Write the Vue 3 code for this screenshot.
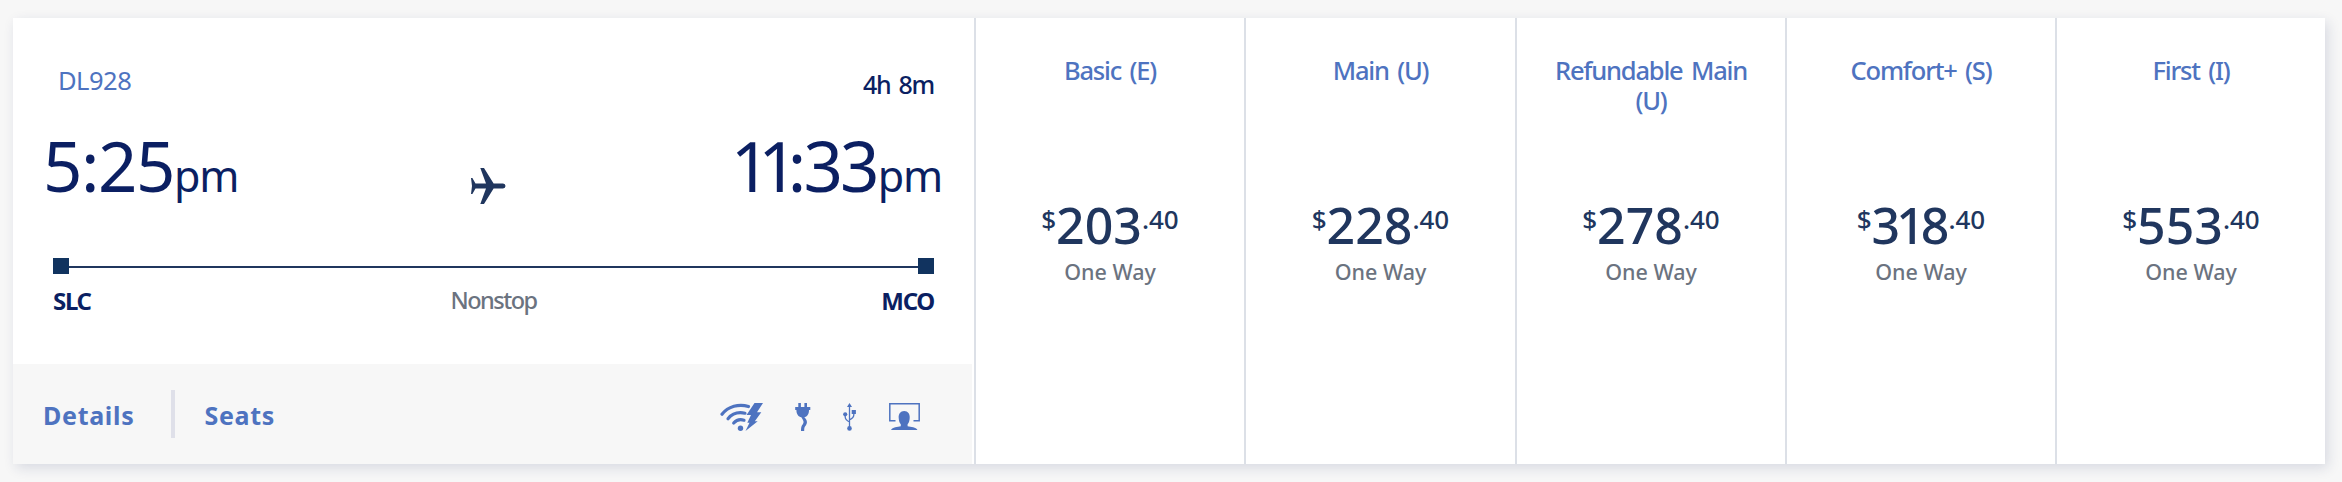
<template>
  <div class="page">
    <div class="flight-card">
      <section class="flight">
        <div class="flight-info">
          <div class="row top-row">
            <a class="flight-number">DL928</a>
            <span class="duration">4h 8m</span>
          </div>
          <div class="row times">
            <div class="time">
              <span>5:25</span><small>pm</small>
            </div>
            <svg class="plane" width="36" height="38" viewBox="0 0 36 38">
              <path d="M1 11 L2.4 11 L5.5 16.6 L16 16.6 L10.3 1 L14 1 L23.6 16.6 L33 16.6 Q35.5 16.9 35.5 19 Q35.5 21.1 33 21.4 L23.6 21.4 L14 37 L10.3 37 L16 21.4 L5.5 21.4 L2.4 27 L1 27 L2 19 Z" fill="#20365e" />
            </svg>
            <div class="time arrival">
              <span class="ones">11</span><span>:33</span><small>pm</small>
            </div>
          </div>
          <div class="track">
            <i class="stop"></i>
            <i class="line"></i>
            <i class="stop"></i>
          </div>
          <div class="row airports">
            <span class="airport">SLC</span>
            <span class="nonstop">Nonstop</span>
            <span class="airport airport-to">MCO</span>
          </div>
        </div>
        <div class="flight-footer">
          <a class="link">Details</a>
          <i class="separator"></i>
          <a class="link">Seats</a>
          <div class="amenities">
            <svg class="wifi" width="44" height="28" viewBox="0 0 44 28">
              <g fill="none" stroke="#4e73c0" stroke-linecap="round">
                <path d="M2 11.3 C8 3.5 19 .4 28.5 3.6" stroke-width="3.2" />
                <path d="M8 15.7 C12 10.7 18.5 8.8 25 10.2" stroke-width="3.2" />
                <path d="M13.7 20 C16.3 17 20 16 24 17.2" stroke-width="3.2" />
              </g>
              <circle cx="20.5" cy="25.2" r="2.7" fill="#4e73c0" />
              <path d="M34.5 0 H43 L37 9.3 H41.3 L34.8 18.3 H37.7 L25.5 28 L29.5 19.7 H27.3 L31 12 H26.5 Z" fill="#4e73c0" />
            </svg>
            <svg class="plug" width="16" height="28" viewBox="0 0 16 28">
              <path d="M3.3 0 H5.9 V4 H9.4 V0 H12 V4 H15.3 V7 H14 C14 11.4 12 13.7 9.3 14.3 C13 18 12.5 20.5 10 23.6 C9.3 24.6 9.2 26 9.2 28 H6 C6 24.8 6.3 23 7.8 21.2 C9.5 19 8.2 17.3 6.3 14.3 C3.5 13.7 1.4 11.4 1.4 7 H.2 V4 H3.3 Z" fill="#4e73c0" />
            </svg>
            <svg class="usb" width="14" height="28" viewBox="0 0 14 28">
              <path d="M6.5 24 V3 M2.2 11 V14 Q2.2 16.8 6.5 19 M10.8 9 V12 Q10.8 14.7 6.5 16.8" fill="none" stroke="#4e73c0" stroke-width="1.3" />
              <path d="M6.5 0 L9 4 H4 Z M8.7 7 H12.9 V11 H8.7 Z" fill="#4e73c0" />
              <circle cx="2.2" cy="11.3" r="2.1" fill="#4e73c0" />
              <circle cx="6.5" cy="25.4" r="2.3" fill="#4e73c0" />
            </svg>
            <svg class="screen" width="31" height="28" viewBox="0 0 31 28">
              <path d="M6.5 17.8 H.8 V.8 H30.2 V17.8 H24.5" fill="none" stroke="#4e73c0" stroke-width="1.5" />
              <path d="M15.2 8 C19 8 21 11 20.7 15 C20.6 18 19.6 20.3 18.6 21.3 V23.2 C22 24 27 23.8 28.5 27 H2 C3.5 23.8 8.5 24 11.8 23.2 V21.3 C10.8 20.3 9.8 18 9.7 15 C9.4 11 11.4 8 15.2 8 Z" fill="#4e73c0" />
            </svg>
          </div>
        </div>
      </section>

      <section v-for="fare in fares" :key="fare.name" class="fare">
        <div class="fare-name">{{ fare.name }}</div>
        <div class="price">
          <span class="currency">$</span>
          <span class="dollars" :class="{ tight: fare.dollars.includes('1') }">{{ fare.dollars }}</span>
          <span class="cents">.40</span>
        </div>
        <div class="trip">One Way</div>
      </section>
    </div>
  </div>
</template>

<script setup>
import { ref } from 'vue';

const fares = ref([
  { name: 'Basic (E)', dollars: '203' },
  { name: 'Main (U)', dollars: '228' },
  { name: 'Refundable Main (U)', dollars: '278' },
  { name: 'Comfort+ (S)', dollars: '318' },
  { name: 'First (I)', dollars: '553' },
]);
</script>

<style>
body {
  background-color: #f7f7f7;
}
</style>

<style scoped>
.page {
  box-sizing: border-box;
  height: 482px;
  padding: 18px 17px 18px 13px;
  overflow: hidden;
  background-color: #f7f7f7;
  font-family: "Noto Sans", "Open Sans", sans-serif;
}

.flight-card {
  display: grid;
  grid-template-columns: 961px 270px 271px 270px 270px 270px;
  height: 446px;
  background-color: #ffffff;
  box-shadow: 3px 4px 12px rgba(30, 40, 100, 0.14);
}

.flight {
  display: flex;
  flex-direction: column;
}

.flight-info {
  height: 346px;
  box-sizing: border-box;
  padding-top: 42px;
}

.row {
  display: flex;
  justify-content: space-between;
}

.top-row {
  height: 65px;
  padding: 0 40px 0 45px;
  line-height: 40px;
}

.flight-number {
  font-size: 25.5px;
  letter-spacing: -0.5px;
  color: #4e73c0;
}

.duration {
  padding-top: 4px;
  font-size: 25px;
  font-weight: 500;
  letter-spacing: -1.3px;
  word-spacing: 3px;
  color: #0b1f62;
}

.times {
  height: 133px;
  padding: 0 32px 0 30px;
}

.time {
  display: flex;
  font-size: 69px;
  line-height: 81px;
  letter-spacing: -1.5px;
  color: #0b1f62;
}

.arrival {
  letter-spacing: -2.8px;
}

.ones {
  letter-spacing: -12px;
  margin-right: 2px;
}

.time small {
  padding-top: 10px;
  font-size: 43px;
  letter-spacing: -1.2px;
}

.arrival small {
  padding-left: 1px;
}

.plane {
  margin: 42px 0 0 8px;
}

.track {
  display: flex;
  align-items: center;
  height: 16px;
  padding: 0 40px;
}

.stop {
  width: 16px;
  height: 16px;
  background-color: #11335f;
}

.line {
  flex: 1;
  height: 2px;
  margin-top: 2px;
  background-color: #20365e;
}

.airports {
  padding: 8px 40px 0;
  line-height: 36px;
  font-size: 24px;
}

.airport {
  flex: 1;
  padding-top: 1px;
  font-weight: 700;
  letter-spacing: -1.3px;
  color: #0b1f62;
}

.airport-to {
  text-align: right;
}

.nonstop {
  color: #6b7380;
  font-size: 23.5px;
  font-weight: 500;
  letter-spacing: -1.5px;
}

.flight-footer {
  display: flex;
  align-items: center;
  width: 959px;
  height: 100px;
  box-sizing: border-box;
  padding: 0 52px 0 30px;
  background-color: #f7f7f7;
}

.link {
  padding-top: 1px;
  font-size: 25px;
  font-weight: 700;
  letter-spacing: 0.7px;
  line-height: 40px;
  color: #4e73c0;
}

.separator {
  width: 4px;
  height: 48px;
  margin: 0 29px 0 37px;
  background-color: #dfe0e9;
}

.amenities {
  display: flex;
  margin: 6px 0 0 auto;
}

.plug {
  margin-left: 31px;
}

.usb {
  margin-left: 32px;
}

.screen {
  margin-left: 32px;
}

.fare {
  box-sizing: border-box;
  padding: 37px 24px 0;
  border-left: 2px solid #dce0e7;
  text-align: center;
}

.fare-name {
  height: 128px;
  font-size: 25.5px;
  font-weight: 500;
  line-height: 30px;
  letter-spacing: -1.2px;
  word-spacing: 3px;
  color: #4e73c0;
}

.price {
  display: flex;
  justify-content: center;
  height: 70px;
  color: #20365e;
  font-weight: 500;
}

.dollars {
  font-size: 50px;
  line-height: 84px;
}

.dollars.tight {
  margin-right: 3px;
  letter-spacing: -4px;
}

.currency,
.cents {
  font-size: 26px;
  line-height: 72px;
}

.trip {
  font-size: 21.5px;
  font-weight: 500;
  line-height: 37px;
  color: #6b7380;
}
</style>
